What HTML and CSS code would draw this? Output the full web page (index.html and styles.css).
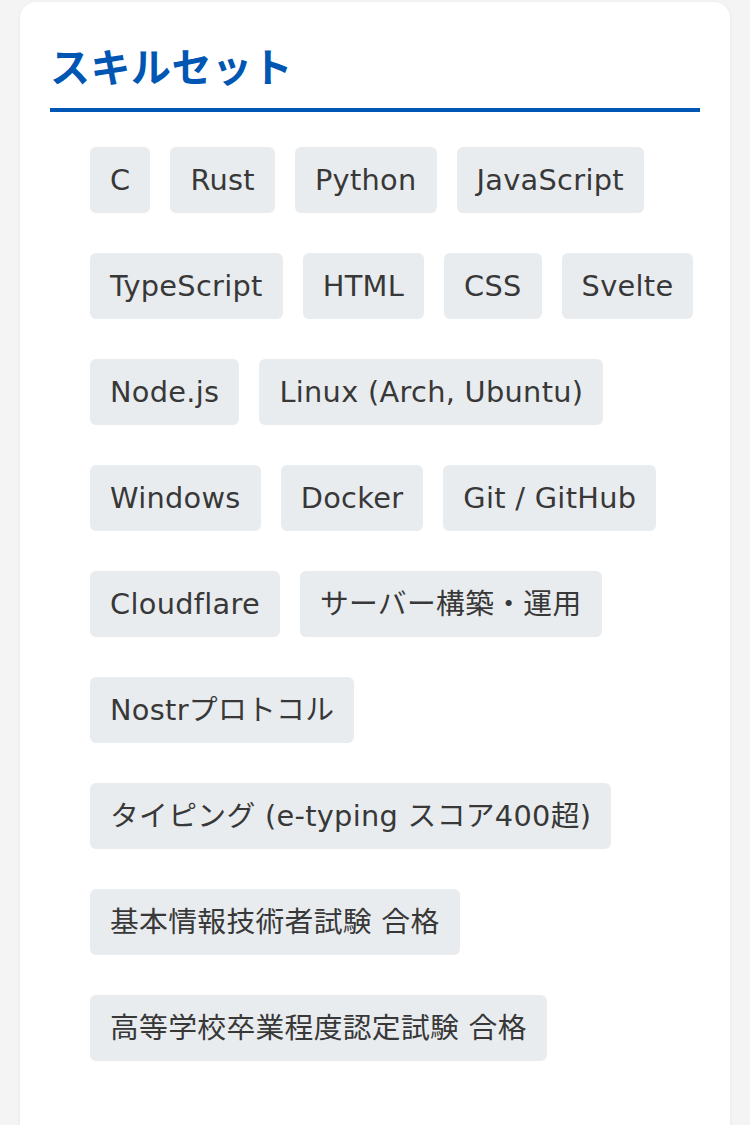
FILE: index.html
```html
<!DOCTYPE html>
<html lang="ja">
<head>
<meta charset="utf-8">
<title>スキルセット</title>
<link rel="stylesheet" href="styles.css">
</head>
<body>
<section class="card">
  <h2 class="card-title">スキルセット</h2>
  <ul class="skills">
    <li class="skill">C</li>
    <li class="skill">Rust</li>
    <li class="skill">Python</li>
    <li class="skill">JavaScript</li>
    <li class="skill">TypeScript</li>
    <li class="skill">HTML</li>
    <li class="skill">CSS</li>
    <li class="skill">Svelte</li>
    <li class="skill">Node.js</li>
    <li class="skill">Linux (Arch, Ubuntu)</li>
    <li class="skill">Windows</li>
    <li class="skill">Docker</li>
    <li class="skill">Git / GitHub</li>
    <li class="skill">Cloudflare</li>
    <li class="skill">サーバー構築・運用</li>
    <li class="skill">Nostrプロトコル</li>
    <li class="skill">タイピング (e-typing スコア400超)</li>
    <li class="skill">基本情報技術者試験 合格</li>
    <li class="skill">高等学校卒業程度認定試験 合格</li>
  </ul>
</section>
</body>
</html>
```
FILE: styles.css
```css
html, body {
  margin: 0;
  padding: 0;
  background: #f4f4f4;
  font-family: "Noto Sans CJK JP", "Noto Sans", sans-serif;
  color: #333;
}
.card {
  margin: 2px 20px 0;
  padding: 39px 30px 100px;
  background: #fff;
  border-radius: 16px;
  box-shadow: 0 1px 4px rgba(0,0,0,0.06);
}
.card-title {
  margin: 0;
  padding-bottom: 19px;
  font-size: 40px;
  line-height: 48px;
  font-weight: 700;
  letter-spacing: 0.5px;
  color: #0056b3;
  border-bottom: 4px solid #0056b3;
}
.skills {
  list-style: none;
  margin: 35px 0 0;
  padding: 0 0 0 40px;
  display: flex;
  flex-wrap: wrap;
  column-gap: 20px;
  row-gap: 40px;
}
.skill {
  background: #e9ecef;
  border-radius: 6px;
  padding: 0 20px;
  height: 66px;
  line-height: 66px;
  font-family: "DejaVu Sans", "Noto Sans CJK JP", sans-serif;
  font-size: 28.8px;
  letter-spacing: 0.3px;
  color: #383838;
  white-space: nowrap;
}
```
